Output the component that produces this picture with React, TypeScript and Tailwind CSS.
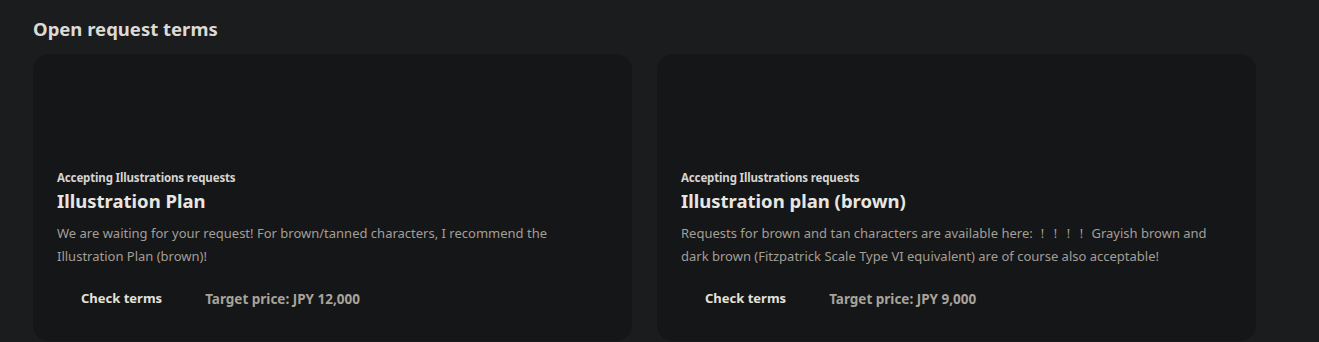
import React from "react";

const cards = [
  {
    title: "Illustration Plan",
    desc: "We are waiting for your request! For brown/tanned characters, I recommend the Illustration Plan (brown)!",
    price: "Target price: JPY 12,000",
  },
  {
    title: "Illustration plan (brown)",
    desc: "Requests for brown and tan characters are available here: ！！！！ Grayish brown and dark brown (Fitzpatrick Scale Type VI equivalent) are of course also acceptable!",
    price: "Target price: JPY 9,000",
  },
];

export default function App() {
  return (
    <div
      className="w-[1319px] h-[342px] overflow-hidden bg-[#1b1c1e] pl-[33px] pt-[16px]"
      style={{ fontFamily: '"Noto Sans", "Open Sans", sans-serif' }}
    >
      <h2 className="text-[18.5px] font-bold leading-[26px] text-[#dcdad6]">
        Open request terms
      </h2>
      <div className="mt-[12px] flex gap-[25px]">
        {cards.map((c) => (
          <div
            key={c.title}
            className="w-[599px] h-[287px] rounded-[16px] bg-[#151618] flex flex-col justify-end px-[24px] pb-[22px]"
          >
            <div className="text-[11.5px] font-bold leading-[16px] text-[#d6d4d0] tracking-[-0.15px]">
              Accepting Illustrations requests
            </div>
            <div className="mt-[2px] text-[18.5px] font-bold leading-[26px] text-[#e8e6e3]">
              {c.title}
            </div>
            <p className="mt-[8px] text-[13px] leading-[23px] text-[#a39e96] pr-[20px]">
              {c.desc}
            </p>
            <div className="mt-[11px] flex items-center h-[40px]">
              <button className="px-[24px] h-[40px] text-[13px] font-bold text-[#e3e1dd]">
                Check terms
              </button>
              <span className="ml-[19px] text-[13.5px] font-bold text-[#a8a39b]">
                {c.price}
              </span>
            </div>
          </div>
        ))}
      </div>
    </div>
  );
}
